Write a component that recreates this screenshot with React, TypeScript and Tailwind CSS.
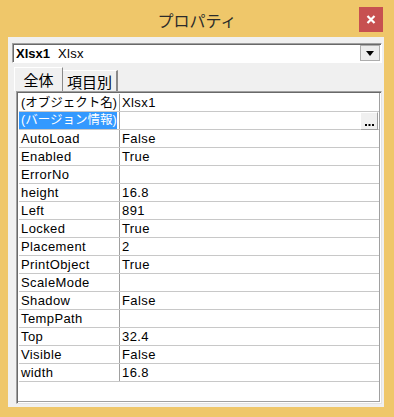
import React from "react";

const rows: [string, string][] = [
  ["(オブジェクト名)", "Xlsx1"],
  ["(バージョン情報)", ""],
  ["AutoLoad", "False"],
  ["Enabled", "True"],
  ["ErrorNo", ""],
  ["height", "16.8"],
  ["Left", "891"],
  ["Locked", "True"],
  ["Placement", "2"],
  ["PrintObject", "True"],
  ["ScaleMode", ""],
  ["Shadow", "False"],
  ["TempPath", ""],
  ["Top", "32.4"],
  ["Visible", "False"],
  ["width", "16.8"],
];

const font = { fontFamily: '"Liberation Sans", "Noto Sans CJK JP", sans-serif' };
const jp = { fontFamily: '"Noto Sans CJK JP", sans-serif' };

export default function App() {
  return (
    <div
      className="w-[394px] h-[417px] bg-[#EFC76A] flex flex-col text-black"
      style={font}
    >
      {/* title bar */}
      <div className="relative h-[37px] shrink-0 flex items-center justify-center">
        <span className="text-[16px] text-[#2b2b2b] pt-[2px]" style={jp}>
          プロパティ
        </span>
        <div className="absolute left-[359px] top-[7px] w-[24px] h-[25px] bg-[#C75050] flex items-center justify-center">
          <svg width="10" height="9" viewBox="0 0 10 9">
            <path d="M1.5 1 L8.5 8 M8.5 1 L1.5 8" stroke="white" strokeWidth="2.2" />
          </svg>
        </div>
      </div>

      {/* client area */}
      <div className="ml-[8px] w-[376px] h-[370px] bg-[#F0F0F0] flex flex-col pl-[4px] pt-[6px]">
        {/* combobox */}
        <div className="w-[370px] h-[20px] bg-white border border-[#A0A0A0] border-r-white border-b-white shadow-[inset_1px_1px_0_#696969] flex items-center pl-[3px] pr-[1px]">
          <span className="text-[13px] font-bold leading-none">Xlsx1</span>
          <span className="text-[13px] leading-none ml-[8px] tracking-[0.3px]">Xlsx</span>
          <div className="ml-auto w-[20px] h-[16px] bg-[#ECECEC] border border-[#ADADAD] flex items-center justify-center">
            <svg width="8" height="5" viewBox="0 0 8 5">
              <path d="M0 0 H8 L4 5 Z" fill="black" />
            </svg>
          </div>
        </div>

        {/* tabs */}
        <div className="flex items-end h-[24px] mt-[4px] pl-[2px]">
          <div className="w-[49px] h-[24px] border-t border-l border-white border-r border-r-[#8a8a8a] flex items-center justify-center relative z-10 bg-[#F0F0F0]">
            <span className="text-[15px] leading-none" style={jp}>
              全体
            </span>
          </div>
          <div className="w-[55px] h-[21px] border-t border-white border-r-2 border-r-[#8a8a8a] flex items-center justify-center">
            <span className="text-[15px] leading-none" style={jp}>
              項目別
            </span>
          </div>
        </div>

        {/* property list */}
        <div className="ml-[4px] w-[366px] h-[313px] bg-white border border-[#A0A0A0] border-r-[#E3E3E3] border-b-[#E3E3E3] shadow-[inset_1px_1px_0_#696969] p-[1px]">
          <div className="w-full h-full border-r border-b border-[#A0A0A0] pt-[1px] pl-[1px] flex flex-col">
            {rows.map(([name, value], i) => (
              <div key={name} className="flex h-[18px] border-b border-[#C8C8C8] shrink-0">
                <div className="w-[101px] shrink-0 border-r border-[#A0A0A0] pl-[2px] text-[13px] leading-[17px] whitespace-nowrap overflow-hidden tracking-[0.4px]">
                  <span
                    className={
                      i === 1
                        ? "block w-[98px] -ml-[2px] pl-[2px] bg-[#3399FF] text-white text-[12.5px] tracking-normal"
                        : i === 0
                        ? "text-[12.5px] tracking-normal"
                        : ""
                    }
                  >
                    {name}
                  </span>
                </div>
                <div className="flex-1 pl-[2px] text-[13px] leading-[17px] flex items-start tracking-[0.4px]">
                  <span>{value}</span>
                  {i === 1 && (
                    <div className="ml-auto mr-[1px] w-[18px] h-[18px] -mb-[1px] bg-[#F0F0F0] border border-[#A0A0A0] border-l-white border-t-white flex items-end justify-center pb-[3px]">
                      <svg width="9" height="2" viewBox="0 0 9 2">
                        <rect x="0" y="0" width="2" height="2" fill="black" />
                        <rect x="3.5" y="0" width="2" height="2" fill="black" />
                        <rect x="7" y="0" width="2" height="2" fill="black" />
                      </svg>
                    </div>
                  )}
                </div>
              </div>
            ))}
          </div>
        </div>
      </div>
    </div>
  );
}
